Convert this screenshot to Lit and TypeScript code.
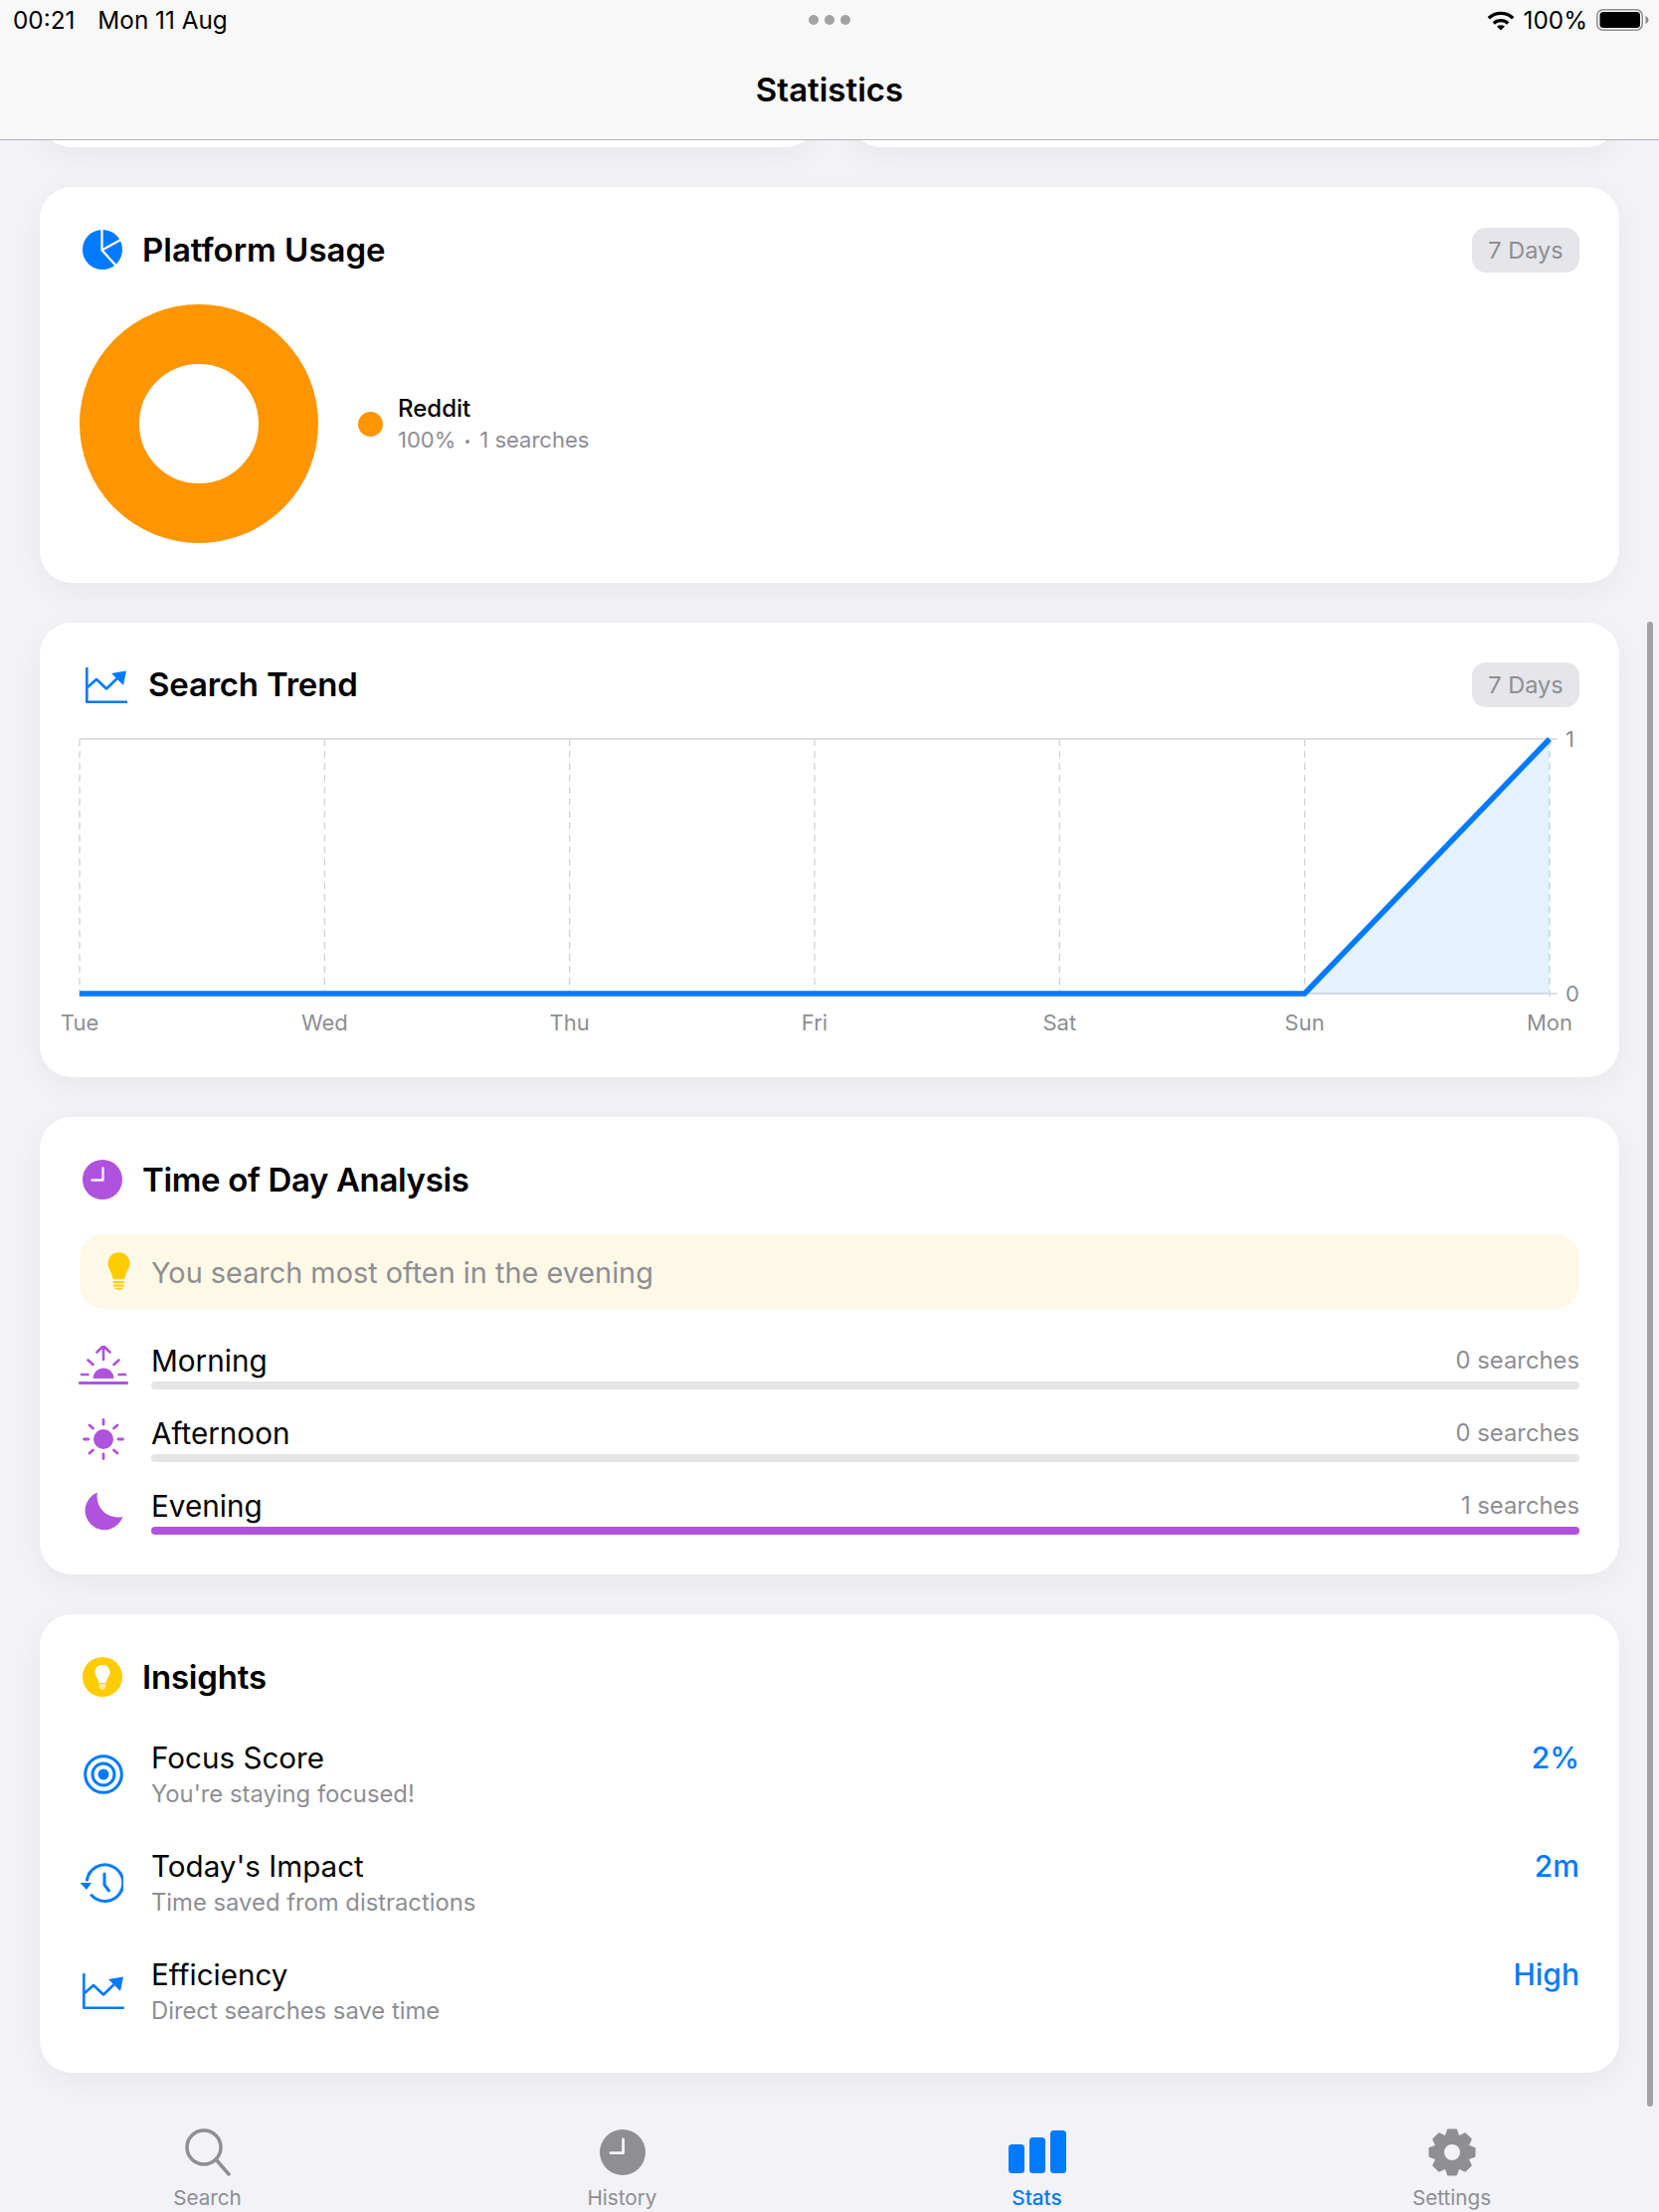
import { LitElement, html, css, svg } from "lit";
import { customElement } from "lit/decorators.js";

const BLUE = "#007aff";
const PURPLE = "#af52de";
const GRAY = "#8e8e93";
const days = ["Tue", "Wed", "Thu", "Fri", "Sat", "Sun", "Mon"];
const STEP = 246.33;

const gearPath = () => {
  const cx = 24, cy = 24, n = 8;
  const pts: string[] = [];
  for (let i = 0; i < n; i++) {
    const a = (i * 2 * Math.PI) / n - Math.PI / 2;
    const rows: [number, number][] = [[-0.36, 17.2], [-0.17, 22.6], [0.17, 22.6], [0.36, 17.2]];
    for (const [d, r] of rows) pts.push(`${(cx + r * Math.cos(a + d)).toFixed(2)} ${(cy + r * Math.sin(a + d)).toFixed(2)}`);
  }
  return `M${pts.join("L")}Z`;
};

const clockIcon = (bg: string, size: number) => html`<svg width=${size} height=${size} viewBox="0 0 40 40"><circle cx="20" cy="20" r="20" fill=${bg}/><path d="M20.5 8.5V20.5H9.5" fill="none" stroke="#fff" stroke-width="2.4" stroke-linecap="round" stroke-linejoin="round" opacity=".92"/></svg>`;
const trendIcon = html`<svg width="42" height="36" viewBox="0 0 42 36" fill="none"><path d="M1.3 1V34.7H41" stroke=${BLUE} stroke-width="2.6" stroke-linecap="round" stroke-linejoin="round"/><path d="M2 20L11 12L21 21.5L33 10" stroke=${BLUE} stroke-width="2.6" stroke-linejoin="round"/><path d="M26 6L41 3.5L38 18Z" fill=${BLUE}/></svg>`;
const pie = html`<svg width="40" height="40" viewBox="0 0 40 40"><circle cx="20" cy="20" r="20" fill=${BLUE}/><path d="M19.5 -1V20.5L34 36.5M19.5 20.5L38.5 10" fill="none" stroke="#fff" stroke-width="2.3"/></svg>`;

const morning = html`<svg width="50" height="42" viewBox="0 2 50 42" fill=${PURPLE}><path d="M14.5 35a10.5 10.5 0 0 1 21 0z"/><rect x="0" y="38" width="50" height="3" rx="1.3"/><g stroke=${PURPLE} stroke-width="2.6" stroke-linecap="round" fill="none"><path d="M25 16V2.5M18.5 8.5L25 2L31.5 8.5M9.5 16.5L14.5 21M40.5 16.5L35.5 21M3 31H9.5M40.5 31H47"/></g></svg>`;
const sun = html`<svg width="42" height="42" viewBox="0 0 42 42" fill=${PURPLE}><circle cx="21" cy="21" r="10"/><g stroke=${PURPLE} stroke-width="2.8" stroke-linecap="round"><path d="M21 1.5v4.5M21 36v4.5M1.5 21h4.5M36 21h4.5M7 7l3.5 3M35 7l-3.5 3M7 35l3.5-3M35 35l-3.5-3"/></g></svg>`;
const moon = html`<svg width="39" height="40" viewBox="0 0 39 40"><path d="M13 0.5A19.5 19.5 0 1 0 38.5 25A21 21 0 0 1 13 0.5Z" fill=${PURPLE}/></svg>`;
const target = html`<svg width="40" height="40" viewBox="0 0 40 40" fill="none" stroke=${BLUE} stroke-width="3"><circle cx="20" cy="20" r="18.3"/><circle cx="20" cy="20" r="11"/><circle cx="20" cy="20" r="5.5" fill=${BLUE} stroke="none"/></svg>`;
const history = html`<svg class="hist" width="44" height="40" viewBox="0 0 44 40" fill="none" stroke=${BLUE} stroke-width="3" stroke-linecap="round" stroke-linejoin="round"><path d="M7.5 17A18.3 18.3 0 1 1 12 32.5"/><path d="M25 11V22L29.5 28"/><path d="M0.5 20H12L7 27Z" fill=${BLUE} stroke="none"/></svg>`;
const bulbSmall = html`<svg width="23" height="39" viewBox="0 0 24 40" fill="#ffcc00"><path d="M12 0C5.5 0 0.5 5 0.5 11.5C0.5 17 4.5 20 6 28H18C19.5 20 23.5 17 23.5 11.5C23.5 5 18.5 0 12 0Z"/><rect x="6" y="30" width="12" height="2.2" rx="1"/><rect x="6" y="33.5" width="12" height="2.2" rx="1"/><path d="M7.5 37H16.5C15.5 40 8.5 40 7.5 37Z"/></svg>`;
const gear = html`<svg width="48" height="48" viewBox="0 0 48 48"><path fill=${GRAY} stroke=${GRAY} stroke-width="2.5" stroke-linejoin="round" d=${gearPath()}/><circle cx="24" cy="24" r="8" fill="#f2f2f7"/></svg>`;

@customElement("app-root")
export class AppRoot extends LitElement {
  static styles = css`
    :host { display: block; width: 1668px; height: 2224px; position: relative; overflow: hidden; background: #f2f2f7; font-family: Inter, "Liberation Sans", sans-serif; color: #000; }
    .top { height: 140px; border-bottom: 1px solid #b3b3b3; background: #f8f8f8; position: relative; z-index: 2; }
    .status { height: 40px; display: flex; align-items: center; padding: 0 10px 0 13px; font-size: 24.3px; gap: 23px; position: relative; }
    .dots { position: absolute; left: 813px; top: 15px; display: flex; gap: 6px; }
    .dots i { width: 10px; height: 10px; border-radius: 50%; background: #a3a3a3; }
    .status-right { margin-left: auto; display: flex; align-items: center; gap: 9px; }
    .nav-title { text-align: center; font-size: 33px; font-weight: 600; line-height: 40px; margin-top: 30px; }
    .frag { display: grid; grid-template-columns: 782px 774px; gap: 32px; height: 7px; padding: 0 40px; }
    .frag div { height: 100px; margin-top: -93px; background: #fff; border-radius: 32px; box-shadow: 0 8px 32px rgba(0,0,0,.05); }
    .cards { display: flex; flex-direction: column; gap: 40px; padding: 40px 40px 0; position: relative; }
    .card { background: #fff; border-radius: 32px; padding: 40px; box-shadow: 0 8px 32px rgba(0,0,0,.05); box-sizing: border-box; }
    .c1 { height: 398px; } .c2 { height: 457px; } .c3 { height: 460px; } .c4 { height: 461px; }
    .head { display: flex; align-items: center; height: 46px; gap: 19px; }
    .c2 .head { height: 45px; }
    .head .ic { width: 44px; padding-left: 2px; box-sizing: border-box; display: flex; justify-content: center; flex: none; }
    .c2 .head .ic { width: 50px; padding-left: 4px; }
    .head h2 { margin: 0; font-size: 33px; font-weight: 600; letter-spacing: -.2px; }
    .c1 h2 { letter-spacing: 0; }
    .c2 h2 { margin-top: -2px; }
    .c3 h2 { letter-spacing: -.35px; }
    .pill { margin-left: auto; height: 45px; width: 108px; border-radius: 14px; background: #e5e5ea; color: #8e8e93; font-size: 23.5px; display: flex; align-items: center; justify-content: center; }
    .donut-row { display: flex; align-items: center; margin-top: 32px; gap: 40px; }
    .legend { display: flex; align-items: center; gap: 15px; }
    .dot { width: 25px; height: 25px; border-radius: 50%; background: #ff9500; }
    .legend b { display: block; font-weight: 500; font-size: 24px; line-height: 32px; padding-top: 1px; margin-bottom: -1px; }
    .legend span { display: block; color: #8e8e93; font-size: 22px; line-height: 32px; }
    .legend i { display: inline-block; width: 4px; height: 4px; border-radius: 50%; background: #8e8e93; margin: 0 10px; vertical-align: middle; }
    .chart { display: block; margin-top: 17px; overflow: visible; }
    .chart text { font-family: Inter, "Liberation Sans", sans-serif; font-size: 22px; fill: #8e8e93; }
    .banner { margin-top: 32px; height: 75px; border-radius: 24px; background: #fef9e6; display: flex; align-items: center; gap: 21px; padding-left: 28px; color: #8e8e93; font-size: 28.85px; }
    .banner span { margin-top: 2px; }
    .rows { display: flex; flex-direction: column; gap: 24px; margin-top: 32px; }
    .row { display: grid; grid-template-columns: 72px 1fr; height: 49px; }
    .row .ric { display: flex; justify-content: center; align-items: center; width: 50px; margin-left: -1px; padding-top: 2px; box-sizing: border-box; height: 49px; }
    .row .line { display: flex; justify-content: space-between; align-items: center; height: 40px; line-height: 40px; margin-bottom: 1px; font-size: 29.7px; }
    .row .line span { color: #8e8e93; font-size: 23.8px; margin-bottom: 1px; }
    .bar { height: 8px; border-radius: 4px; background: #e5e5e5; }
    .bar.on { background: #af52de; }
    .ins { display: flex; flex-direction: column; gap: 29px; margin-top: 36px; }
    .irow { display: grid; grid-template-columns: 72px 1fr auto; height: 80px; }
    .irow .ric { display: flex; justify-content: center; align-items: center; width: 48px; padding-bottom: 2px; box-sizing: border-box; }
    .hist { margin-left: -4px; }
    .irow h3 { margin: 0 0 -1.5px; font-size: 29.6px; font-weight: 400; line-height: 44px; }
    .irow p { margin: 0; font-size: 23.8px; color: #8e8e93; line-height: 32px; }
    .irow .val { color: #007aff; font-size: 30px; font-weight: 500; line-height: 44px; }
    .tabs { position: absolute; left: 0; right: 0; bottom: 0; height: 90px; display: grid; grid-template-columns: repeat(4, 1fr); }
    .tab { display: flex; flex-direction: column; align-items: center; color: #8e8e93; font-size: 20.7px; }
    .tab .ti { height: 59px; margin-bottom: 4px; display: flex; align-items: center; justify-content: center; }
    .tab.on { color: #007aff; font-weight: 500; }
    .scroll { position: absolute; left: 1656px; top: 625px; width: 6px; height: 1493px; border-radius: 3px; background: #a1a1a6; }
  `;

  render() {
    const top = 15, bot = 271, right = STEP * 6;
    return html`
      <div class="top">
        <div class="status">
          <span>00:21</span><span>Mon 11 Aug</span>
          <div class="dots"><i></i><i></i><i></i></div>
          <div class="status-right">
            <svg width="28" height="21" viewBox="0 0 28 21" fill="none" stroke="#000" stroke-width="3.3"><path d="M1.8 8.3A17.5 17.5 0 0 1 26.2 8.3"/><path d="M6.8 13.5A10.5 10.5 0 0 1 21.2 13.5"/><path d="M10 16.6Q14 14 18 16.6L14 20.6Z" fill="#000" stroke="none"/></svg>
            <span>100%</span>
            <svg width="53" height="22" viewBox="0 0 53 22"><rect x=".75" y=".75" width="45.5" height="20.5" rx="6" fill="none" stroke="#8c8c8c" stroke-width="1.5"/><rect x="3.5" y="3" width="40.5" height="16" rx="3.5"/><path d="M49.5 7C51.5 8 52.5 9.5 52.5 11S51.5 14 49.5 15Z" fill="#8c8c8c"/></svg>
          </div>
        </div>
        <div class="nav-title">Statistics</div>
      </div>
      <div class="frag"><div></div><div></div></div>
      <div class="cards">
        <section class="card c1">
          <div class="head">
            <span class="ic">${pie}</span>
            <h2>Platform Usage</h2>
            <div class="pill">7 Days</div>
          </div>
          <div class="donut-row">
            <svg width="240" height="240" viewBox="0 0 240 240"><circle cx="120" cy="120" r="90" fill="none" stroke="#ff9500" stroke-width="60"/></svg>
            <div class="legend"><div class="dot"></div><div><b>Reddit</b><span>100%<i></i>1 searches</span></div></div>
          </div>
        </section>
        <section class="card c2">
          <div class="head">
            <span class="ic">${trendIcon}</span>
            <h2>Search Trend</h2>
            <div class="pill">7 Days</div>
          </div>
          <svg class="chart" width="1508" height="316" viewBox="0 0 1508 316">
            ${days.map((d, i) => svg`<line x1=${i * STEP} x2=${i * STEP} y1=${top} y2=${bot + 4} stroke="#cfcfd2" stroke-width="1.2" stroke-dasharray="7 5"/>`)}
            <line x1="0" x2=${right + 8} y1=${top} y2=${top} stroke="#e0e0e0" stroke-width="2"/>
            <line x1="0" x2=${right + 8} y1=${bot} y2=${bot} stroke="#e0e0e0" stroke-width="2"/>
            <path d="M${STEP * 5} ${bot}L${right} ${top}V${bot}Z" fill="#007aff" fill-opacity=".1"/>
            <path d="M0 ${bot}H${STEP * 5}L${right} ${top}" fill="none" stroke=${BLUE} stroke-width="5.5"/>
            <text x=${right + 16} y=${top + 8}>1</text>
            <text x=${right + 16} y=${bot + 8}>0</text>
            ${days.map((d, i) => svg`<text x=${i * STEP} y=${bot + 37} text-anchor="middle">${d}</text>`)}
          </svg>
        </section>
        <section class="card c3">
          <div class="head"><span class="ic">${clockIcon(PURPLE, 40)}</span><h2>Time of Day Analysis</h2></div>
          <div class="banner">${bulbSmall}<span>You search most often in the evening</span></div>
          <div class="rows">
            ${[["Morning", "0 searches", morning, false], ["Afternoon", "0 searches", sun, false], ["Evening", "1 searches", moon, true]].map(([n, v, ic, on]) => html`
              <div class="row"><div class="ric">${ic}</div><div><div class="line">${n}<span>${v}</span></div><div class="bar ${on ? "on" : ""}"></div></div></div>`)}
          </div>
        </section>
        <section class="card c4">
          <div class="head"><span class="ic"><svg width="40" height="40" viewBox="0 0 40 40"><circle cx="20" cy="20" r="20" fill="#ffcc00"/><g fill="#fff"><path d="M20 8C15 8 12.5 11.5 12.5 15C12.5 19 15.5 21 16.5 26H23.5C24.5 21 27.5 19 27.5 15C27.5 11.5 25 8 20 8Z"/><rect x="16.5" y="27.3" width="7" height="1.3" rx=".6"/><rect x="16.5" y="29.3" width="7" height="1.3" rx=".6"/><path d="M17.5 31.3H22.5C22 33 18 33 17.5 31.3Z"/></g></svg></span><h2>Insights</h2></div>
          <div class="ins">
            ${[["Focus Score", "You're staying focused!", "2%", target], ["Today's Impact", "Time saved from distractions", "2m", history], ["Efficiency", "Direct searches save time", "High", trendIcon]].map(([t, s, v, ic]) => html`
              <div class="irow"><div class="ric">${ic}</div><div><h3>${t}</h3><p>${s}</p></div><div class="val">${v}</div></div>`)}
          </div>
        </section>
      </div>
      <div class="tabs">
        <div class="tab"><div class="ti"><svg width="46" height="48" viewBox="0 0 46 48" fill="none" stroke=${GRAY} stroke-width="3.5" stroke-linecap="round"><circle cx="19" cy="19" r="17"/><path d="M31 31L44 46"/></svg></div>Search</div>
        <div class="tab"><div class="ti">${clockIcon(GRAY, 46)}</div>History</div>
        <div class="tab on"><div class="ti"><svg width="58" height="43" viewBox="0 0 58 43" fill=${BLUE}><rect x="0" y="14" width="16" height="29" rx="3.5"/><rect x="21" y="7" width="16" height="36" rx="3.5"/><rect x="42" y="0" width="16" height="43" rx="3.5"/></svg></div>Stats</div>
        <div class="tab"><div class="ti">${gear}</div>Settings</div>
      </div>
      <div class="scroll"></div>
    `;
  }
}
